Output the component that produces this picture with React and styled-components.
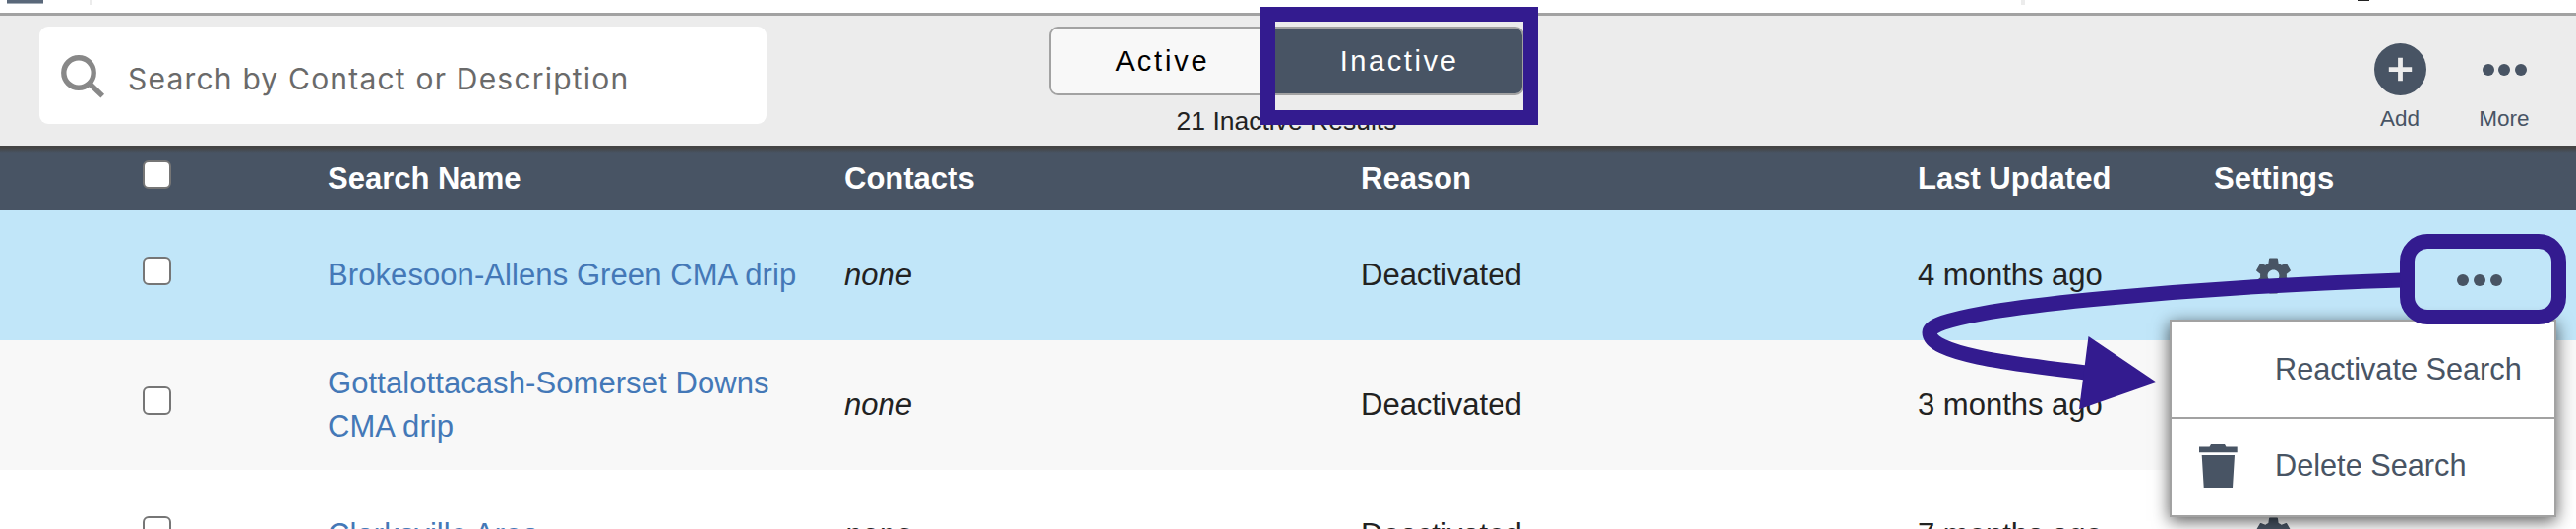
import React, { Component } from 'react'
import styled, { createGlobalStyle } from 'styled-components'

const slate = '#485464'
const purple = '#331b8f'

const searches = [
  { name: 'Brokesoon-Allens Green CMA drip', updated: '4 months ago' },
  { name: 'Gottalottacash-Somerset Downs CMA drip', updated: '3 months ago' },
  { name: 'Clarksville Area', updated: '7 months ago' }
]

const SearchIcon = () => (
  <svg width="46" height="46" viewBox="0 0 46 46" fill="none">
    <circle cx="19" cy="19" r="15.2" stroke="#888" strokeWidth="5.4" />
    <path d="M29.5 29.5L43.2 42.6" stroke="#888" strokeWidth="5.4" />
  </svg>
)

const GearIcon = () => (
  <svg width="43" height="43" viewBox="0 0 24 24" fill={slate}>
    <path d="M19.43 12.98c.04-.32.07-.64.07-.98s-.03-.66-.07-.98l2.11-1.65c.19-.15.24-.42.12-.64l-2-3.46c-.12-.22-.39-.3-.61-.22l-2.49 1c-.52-.4-1.08-.73-1.69-.98l-.38-2.65C14.46 2.18 14.25 2 14 2h-4c-.25 0-.46.18-.49.42l-.38 2.65c-.61.25-1.17.59-1.69.98l-2.49-1c-.23-.09-.49 0-.61.22l-2 3.46c-.13.22-.07.49.12.64l2.11 1.65c-.04.32-.07.65-.07.98s.03.66.07.98l-2.11 1.65c-.19.15-.24.42-.12.64l2 3.46c.12.22.39.3.61.22l2.49-1c.52.4 1.08.73 1.69.98l.38 2.65c.03.24.24.42.49.42h4c.25 0 .46-.18.49-.42l.38-2.65c.61-.25 1.17-.59 1.69-.98l2.49 1c.23.09.49 0 .61-.22l2-3.46c.12-.22.07-.49-.12-.64l-2.11-1.65zM12 15.3c-1.82 0-3.3-1.48-3.3-3.3s1.48-3.3 3.3-3.3 3.3 1.48 3.3 3.3-1.48 3.3-3.3 3.3z" />
  </svg>
)

const TrashIcon = () => (
  <svg width="39" height="44" viewBox="0 0 39 44" fill={slate}>
    <path d="M0 2.6H10.6L12 0H26L27.4 2.6H38.7V8.3H0zM2.7 11H36L34 44H4.7z" />
  </svg>
)

const AddIcon = () => (
  <svg width="53" height="53" viewBox="0 0 53 53">
    <circle cx="26.5" cy="26.5" r="26.5" fill={slate} />
    <path d="M26.5 14.8V38.2M14.8 26.7H38.2" stroke="#ececec" strokeWidth="4.8" />
  </svg>
)

const Ellipsis = ({ gap }) => (
  <Dots $gap={gap}>
    <Dot />
    <Dot />
    <Dot />
  </Dots>
)

const Row = ({ search, selected, striped }) => (
  <BodyRow $selected={selected} $striped={striped}>
    <CheckCell>
      <Checkbox type="checkbox" />
    </CheckCell>
    <NameCell>
      <NameLink>{search.name}</NameLink>
    </NameCell>
    <Cell>
      <em>none</em>
    </Cell>
    <Cell>Deactivated</Cell>
    <Cell>{search.updated}</Cell>
    <GearCell>
      <GearIcon />
    </GearCell>
    <MoreCell>{selected && <Ellipsis gap={5} />}</MoreCell>
  </BodyRow>
)

class App extends Component {
  render() {
    return (
      <Page>
        <GlobalStyle />

        <TopBar>
          <MenuStub />
          <Divider />
          <Divider $wide />
          <GlyphStub />
        </TopBar>

        <Toolbar>
          <SearchBox>
            <SearchIcon />
            <Placeholder>Search by Contact or Description</Placeholder>
          </SearchBox>

          <Filter>
            <Toggle>
              <ToggleButton>Active</ToggleButton>
              <ToggleButton $active>Inactive</ToggleButton>
            </Toggle>
            <Results>21 Inactive Results</Results>
            <ToggleHighlight />
          </Filter>

          <Actions>
            <Action $width={54}>
              <IconSlot>
                <AddIcon />
              </IconSlot>
              Add
            </Action>
            <Action $width={56}>
              <IconSlot>
                <Ellipsis gap={4.5} />
              </IconSlot>
              More
            </Action>
          </Actions>
        </Toolbar>

        <HeadRow>
          <CheckCell $head>
            <Checkbox type="checkbox" />
          </CheckCell>
          <Cell>Search Name</Cell>
          <Cell>Contacts</Cell>
          <Cell>Reason</Cell>
          <Cell>Last Updated</Cell>
          <Cell>Settings</Cell>
        </HeadRow>

        {searches.map((search, i) => (
          <Row
            key={search.name}
            search={search}
            selected={i === 0}
            striped={i === 1}
          />
        ))}

        <Menu>
          <MenuItem>
            <MenuIcon />
            Reactivate Search
          </MenuItem>
          <MenuItem>
            <MenuIcon>
              <TrashIcon />
            </MenuIcon>
            Delete Search
          </MenuItem>
        </Menu>

        <MoreHighlight />
        <Arrow width="250" height="150" viewBox="1945 272 250 150">
          <path
            d="M2440 285C2280 290 1961 311 1961 338C1961 360 2040 369.5 2120 379"
            fill="none"
            stroke={purple}
            strokeWidth="15"
          />
          <path d="M2122.5 342L2191.7 388.7L2113 416.3z" fill={purple} />
        </Arrow>
      </Page>
    )
  }
}

const GlobalStyle = createGlobalStyle`
  * {
    box-sizing: border-box;
  }

  body {
    margin: 0;
    background: #fff;
  }
`

const Page = styled.div`
  position: relative;
  width: 2618px;
  height: 538px;
  overflow: hidden;
  background: #fff;
  color: #222;
  font-family: 'Liberation Sans', Arial, sans-serif;
  font-size: 31px;
  line-height: 44px;
`

const TopBar = styled.div`
  display: flex;
  height: 13px;
  padding-left: 7px;
`

const MenuStub = styled.div`
  width: 37px;
  height: 4px;
  background: #5a687a;
  border-bottom: 1px solid #a3acb6;
`

const Divider = styled.div`
  width: ${props => (props.$wide ? 4 : 3)}px;
  height: 5px;
  margin-left: ${props => (props.$wide ? 1960 : 47)}px;
  background: #ececec;
`

const GlyphStub = styled.div`
  width: 12px;
  height: 1px;
  margin-left: 338px;
  background: #222;
`

const Toolbar = styled.div`
  display: flex;
  align-items: flex-start;
  height: 135px;
  padding: 0 45px 0 40px;
  border-top: 3px solid #a2a2a2;
  background: #ececec;
`

const SearchBox = styled.div`
  display: flex;
  align-items: center;
  width: 739px;
  height: 99px;
  margin-top: 11px;
  padding: 3px 0 0 21px;
  border-radius: 9px;
  background: #fff;
`

const Placeholder = styled.span`
  margin-left: 23px;
  padding-top: 3px;
  color: #6a6a6a;
  font-family: Inter, sans-serif;
  font-size: 30px;
  font-weight: 400;
  letter-spacing: 1.2px;
  white-space: nowrap;
`

const Filter = styled.div`
  position: relative;
  width: 483px;
  margin: 10.5px 0 0 287px;
`

const Toggle = styled.div`
  display: flex;
  height: 70.5px;
  border: 2px solid #a2a2a2;
  border-radius: 9px;
  overflow: hidden;
`

const ToggleButton = styled.div`
  width: ${props => (props.$active ? 254 : 225)}px;
  padding: 11px 0 0 ${props => (props.$active ? 4 : 2)}px;
  background: ${props => (props.$active ? slate : '#f8f8f8')};
  color: ${props => (props.$active ? '#fff' : '#000')};
  font-size: 29px;
  letter-spacing: ${props => (props.$active ? 2.6 : 2.8)}px;
  text-align: center;
`

const Results = styled.div`
  margin-top: 4px;
  font-size: 26.5px;
  text-align: center;
`

const ToggleHighlight = styled.div`
  position: absolute;
  top: -19.5px;
  left: 215px;
  width: 282px;
  height: 120px;
  border: 15px solid ${purple};
`

const Actions = styled.div`
  display: flex;
  gap: 51px;
  margin: 28px 0 0 auto;
`

const Action = styled.div`
  display: flex;
  flex-direction: column;
  align-items: center;
  width: ${props => props.$width}px;
  color: ${slate};
  font-size: 22.5px;
  line-height: 48px;
`

const IconSlot = styled.div`
  display: flex;
  align-items: center;
  height: 53px;
`

const Dots = styled.div`
  display: flex;
  gap: ${props => props.$gap}px;
`

const Dot = styled.div`
  width: 12px;
  height: 12px;
  border-radius: 50%;
  background: ${slate};
`

const TableRow = styled.div`
  display: grid;
  grid-template-columns: 333px 525px 525px 566px 301px 121px 1fr;
  align-items: center;
`

const Cell = styled.div`
  white-space: nowrap;
`

const HeadRow = styled(TableRow)`
  height: 66px;
  background: linear-gradient(#444 0, #444 3px, ${slate} 8px);
  color: #fff;
  font-weight: bold;

  ${Cell} {
    padding-top: 2px;
  }
`

const BodyRow = styled(TableRow)`
  height: 132px;
  background: ${props =>
    props.$selected ? '#c1e6f9' : props.$striped ? '#f8f8f8' : '#fff'};
`

const CheckCell = styled.div`
  display: flex;
  padding: 0 0 ${props => (props.$head ? 7 : 9)}px 145px;
`

const Checkbox = styled.input`
  appearance: none;
  width: 28.5px;
  height: 29px;
  margin: 0;
  border: 2px solid #767676;
  border-radius: 6px;
  background: #fff;
`

const NameCell = styled.div`
  padding-right: 24px;
`

const NameLink = styled.a`
  color: #4478b7;
  letter-spacing: 0.08px;
`

const GearCell = styled.div`
  display: flex;
  justify-content: center;
`

const MoreCell = styled.div`
  padding: 9px 0 0 126px;
`

const Menu = styled.div`
  position: absolute;
  top: 325px;
  left: 2205px;
  width: 393px;
  height: 201px;
  border: 2px solid #a2a2a2;
  background: #fff;
  box-shadow: 0 4px 16px rgba(0, 0, 0, 0.65);
`

const MenuItem = styled.div`
  display: flex;
  align-items: center;
  height: 97px;
  padding-left: 28px;
  color: ${slate};
  font-size: 30.7px;
  white-space: nowrap;

  & + & {
    height: 98px;
    border-top: 2px solid #a2a2a2;
  }
`

const MenuIcon = styled.div`
  display: flex;
  width: 77px;
`

const MoreHighlight = styled.div`
  position: absolute;
  top: 238px;
  left: 2439px;
  width: 169px;
  height: 92px;
  border: 15px solid ${purple};
  border-radius: 28px;
`

const Arrow = styled.svg`
  position: absolute;
  top: 272px;
  left: 1945px;
  overflow: visible;
`

export default App
